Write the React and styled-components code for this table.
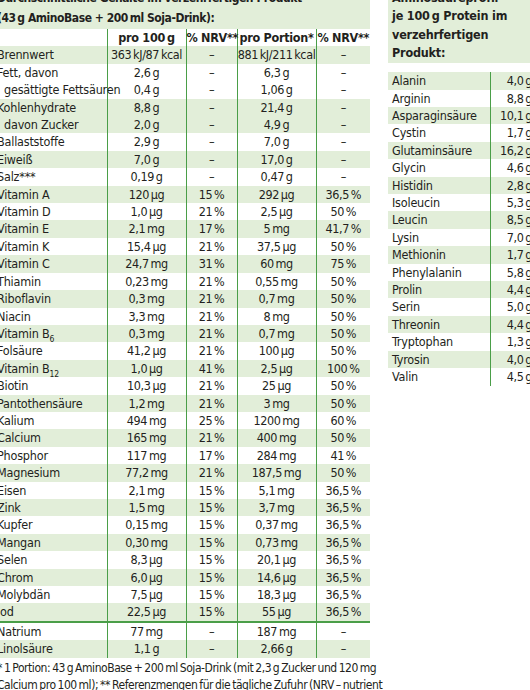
import React from 'react';
import styled, { createGlobalStyle } from 'styled-components';

const ink = '#231f20';
const rule = '#4a9e48';
const tint = '#e2eed9';
const narrow = `"DejaVu Sans Condensed", "DejaVu Sans", sans-serif`;

const GlobalStyle = createGlobalStyle`
  html, body {
    margin: 0;
    padding: 0;
    overflow: hidden;
    background: #ffffff;
  }
  body {
    font-family: ${narrow};
    font-stretch: condensed;
    color: ${ink};
  }
`;

const nutrients = [
  ['Brennwert', '363 kJ/87 kcal', '–', '881 kJ/211 kcal', '–', true],
  ['Fett, davon', '2,6 g', '–', '6,3 g', '–', false],
  ['gesättigte Fettsäuren', '0,4 g', '–', '1,06 g', '–', false, true],
  ['Kohlenhydrate', '8,8 g', '–', '21,4 g', '–', true],
  ['davon Zucker', '2,0 g', '–', '4,9 g', '–', true, true],
  ['Ballaststoffe', '2,9 g', '–', '7,0 g', '–', false],
  ['Eiweiß', '7,0 g', '–', '17,0 g', '–', true],
  ['Salz***', '0,19 g', '–', '0,47 g', '–', false],
  ['Vitamin A', '120 µg', '15 %', '292 µg', '36,5 %', true],
  ['Vitamin D', '1,0 µg', '21 %', '2,5 µg', '50 %', false],
  ['Vitamin E', '2,1 mg', '17 %', '5 mg', '41,7 %', true],
  ['Vitamin K', '15,4 µg', '21 %', '37,5 µg', '50 %', false],
  ['Vitamin C', '24,7 mg', '31 %', '60 mg', '75 %', true],
  ['Thiamin', '0,23 mg', '21 %', '0,55 mg', '50 %', false],
  ['Riboflavin', '0,3 mg', '21 %', '0,7 mg', '50 %', true],
  ['Niacin', '3,3 mg', '21 %', '8 mg', '50 %', false],
  [['Vitamin B', '6'], '0,3 mg', '21 %', '0,7 mg', '50 %', true],
  ['Folsäure', '41,2 µg', '21 %', '100 µg', '50 %', false],
  [['Vitamin B', '12'], '1,0 µg', '41 %', '2,5 µg', '100 %', true],
  ['Biotin', '10,3 µg', '21 %', '25 µg', '50 %', false],
  ['Pantothensäure', '1,2 mg', '21 %', '3 mg', '50 %', true],
  ['Kalium', '494 mg', '25 %', '1200 mg', '60 %', false],
  ['Calcium', '165 mg', '21 %', '400 mg', '50 %', true],
  ['Phosphor', '117 mg', '17 %', '284 mg', '41 %', false],
  ['Magnesium', '77,2 mg', '21 %', '187,5 mg', '50 %', true],
  ['Eisen', '2,1 mg', '15 %', '5,1 mg', '36,5 %', false],
  ['Zink', '1,5 mg', '15 %', '3,7 mg', '36,5 %', true],
  ['Kupfer', '0,15 mg', '15 %', '0,37 mg', '36,5 %', false],
  ['Mangan', '0,30 mg', '15 %', '0,73 mg', '36,5 %', true],
  ['Selen', '8,3 µg', '15 %', '20,1 µg', '36,5 %', false],
  ['Chrom', '6,0 µg', '15 %', '14,6 µg', '36,5 %', true],
  ['Molybdän', '7,5 µg', '15 %', '18,3 µg', '36,5 %', false],
  ['Jod', '22,5 µg', '15 %', '55 µg', '36,5 %', true],
  ['Natrium', '77 mg', '–', '187 mg', '–', false],
  ['Linolsäure', '1,1 g', '–', '2,66 g', '–', true],
];

const aminos = [
  ['Alanin', '4,0 g'],
  ['Arginin', '8,8 g'],
  ['Asparaginsäure', '10,1 g'],
  ['Cystin', '1,7 g'],
  ['Glutaminsäure', '16,2 g'],
  ['Glycin', '4,6 g'],
  ['Histidin', '2,8 g'],
  ['Isoleucin', '5,3 g'],
  ['Leucin', '8,5 g'],
  ['Lysin', '7,0 g'],
  ['Methionin', '1,7 g'],
  ['Phenylalanin', '5,8 g'],
  ['Prolin', '4,4 g'],
  ['Serin', '5,0 g'],
  ['Threonin', '4,4 g'],
  ['Tryptophan', '1,3 g'],
  ['Tyrosin', '4,0 g'],
  ['Valin', '4,5 g'],
];

// thin space between number and unit, like the print layout
const thin = (s) => s.replace(/ /g, '\u2009');

const Page = styled.div`
  display: flex;
  align-items: flex-start;
  gap: 18px;
  width: 580px;
  margin: -11px 0 0 -7px;
`;

const Block = styled.section`
  width: ${(p) => p.$width}px;
  flex: none;
`;

const Heading = styled.h2`
  margin: 0;
  padding: 0 4px 1px;
  background: ${tint};
  font-weight: 700;
  font-size: ${(p) => p.$size}px;
  line-height: ${(p) => p.$lh}px;
  letter-spacing: ${(p) => p.$track}px;
  color: ${ink};
  white-space: nowrap;
`;

const Table = styled.table`
  width: 100%;
  border-collapse: collapse;
  table-layout: fixed;
  font-size: 12.5px;
  margin-top: ${(p) => p.$gap || 0}px;
`;

const Row = styled.tr`
  height: 17.4px;
  background: ${(p) => (p.$shade ? tint : 'transparent')};
  border-bottom: ${(p) => (p.$rule ? `2px solid ${rule}` : 'none')};
`;

const Label = styled.td`
  padding: 0 0 0 ${(p) => (p.$indent ? 11 : 4)}px;
  line-height: 17.4px;
  letter-spacing: -0.2px;
  white-space: nowrap;
  text-align: left;
`;

const Value = styled.td`
  padding: 0 ${(p) => (p.$right ? 6 : 0)}px 0 0;
  line-height: 17.4px;
  letter-spacing: ${(p) => (p.$bold ? -0.3 : -0.4)}px;
  white-space: nowrap;
  text-align: ${(p) => (p.$right ? 'right' : 'center')};
  border-left: 1px solid ${rule};
  font-weight: ${(p) => (p.$bold ? 700 : 400)};
`;

const Sub = styled.sub`
  font-size: 8.5px;
  line-height: 0;
`;

const Footnote = styled.p`
  margin: 2px 0 0;
  padding: 0 4px;
  font-size: 12px;
  line-height: 17px;
  letter-spacing: -0.45px;
  word-spacing: -1px;
  white-space: nowrap;
`;

const LabelText = ({ text }) =>
  Array.isArray(text) ? (
    <>
      {text[0]}
      <Sub>{text[1]}</Sub>
    </>
  ) : (
    text
  );

const App = () => {
  return (
    <>
      <GlobalStyle />
      <Page>
        <Block $width={377}>
          <Heading $size={12} $lh={19.5} $track={-0.45}>
            Durchschnittliche Gehalte im verzehrfertigen Produkt
            <br />
            (43{'\u2009'}g AminoBase + 200{'\u2009'}ml Soja-Drink):
          </Heading>
          <Table>
            <colgroup>
              <col style={{ width: 114 }} />
              <col style={{ width: 79 }} />
              <col style={{ width: 51 }} />
              <col style={{ width: 79 }} />
              <col style={{ width: 54 }} />
            </colgroup>
            <tbody>
              <Row>
                <Label />
                <Value $bold>pro 100{'\u2009'}g</Value>
                <Value $bold>% NRV**</Value>
                <Value $bold>pro Portion*</Value>
                <Value $bold>% NRV**</Value>
              </Row>
              {nutrients.map(([name, a, b, c, d, shade, indent], i) => (
                <Row key={i} $shade={shade} $rule={i === 32}>
                  <Label $indent={indent}>
                    <LabelText text={name} />
                  </Label>
                  <Value>{thin(a)}</Value>
                  <Value>{thin(b)}</Value>
                  <Value>{thin(c)}</Value>
                  <Value>{thin(d)}</Value>
                </Row>
              ))}
            </tbody>
          </Table>
          <Footnote>
            * 1 Portion: 43{'\u2009'}g AminoBase + 200{'\u2009'}ml Soja-Drink (mit 2,3{'\u2009'}g Zucker und 120{'\u2009'}mg
            <br />
            Calcium pro 100{'\u2009'}ml); ** Referenzmengen für die tägliche Zufuhr (NRV – nutrient
            <br />
            reference values); *** Der Salzgehalt ergibt sich aus natürlichem Natrium.
          </Footnote>
        </Block>
        <Block $width={150}>
          <Heading $size={12.5} $lh={18.3} $track={-0.2}>
            Aminosäureprofil
            <br />
            je 100{'\u2009'}g Protein im
            <br />
            verzehrfertigen
            <br />
            Produkt:
          </Heading>
          <Table $gap={9}>
            <colgroup>
              <col style={{ width: 102 }} />
              <col style={{ width: 48 }} />
            </colgroup>
            <tbody>
              {aminos.map(([name, v], i) => (
                <Row key={name} $shade={i % 2 === 0}>
                  <Label>{name}</Label>
                  <Value $right>{thin(v)}</Value>
                </Row>
              ))}
            </tbody>
          </Table>
        </Block>
      </Page>
    </>
  );
};

export default App;
